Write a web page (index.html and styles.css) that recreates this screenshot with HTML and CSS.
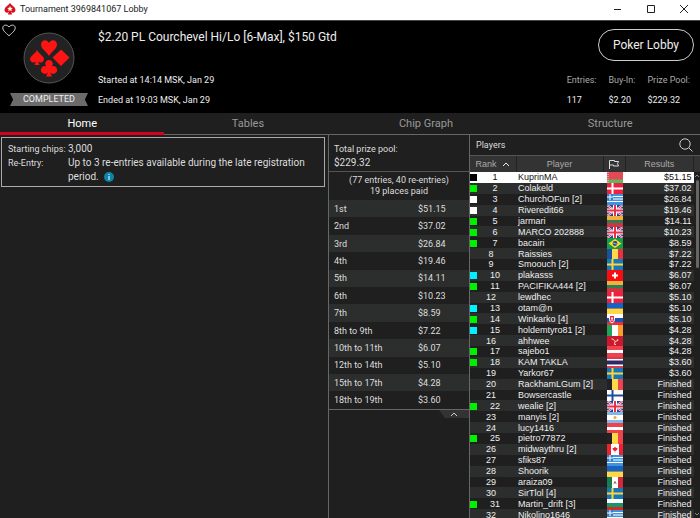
FILE: index.html
```html
<!DOCTYPE html>
<html lang="en">
<head>
    <meta charset="UTF-8">
    <meta name="viewport" content="width=device-width, initial-scale=1.0">
    <title>Tournament 3969841067 Lobby</title>
    <link rel="stylesheet" href="styles.css">
</head>
<body>
    <!-- Flag shapes, referenced from the players table -->
    <svg class="sprite" aria-hidden="true">
        <symbol id="by" viewBox="0 0 16 11" preserveAspectRatio="none"><path fill="#e34a55" d="M0 0h16v11H0z"/><path fill="#5cb85c" d="M0 7.500h16V11H0z"/><path stroke="#f3d5d5" stroke-dasharray="1 1" d="M1 0v11"/></symbol>
        <symbol id="dk" viewBox="0 0 16 11" preserveAspectRatio="none"><path fill="#f0203f" d="M0 0h16v11H0z"/><path stroke="#fff" stroke-width="2" d="M5.500 0v11M0 5.500h16"/></symbol>
        <symbol id="gr" viewBox="0 0 16 11" preserveAspectRatio="none"><path fill="#3f93dc" d="M0 0h16v11H0z"/><path stroke="#fff" d="M6 2.500h10M6 5h10M0 7.500h16"/><path fill="#2b7fcb" d="M0 0h6v6H0z"/><path stroke="#fff" d="M3 0v6M0 3h6"/></symbol>
        <symbol id="gb" viewBox="0 0 16 11" preserveAspectRatio="none"><path fill="#2b3f94" d="M0 0h16v11H0z"/><path stroke="#fff" stroke-width="2" d="M0 0l16 11M16 0L0 11"/><path stroke="#e0304a" d="M0 0l16 11M16 0L0 11"/><path stroke="#fff" stroke-width="4" d="M8 0v11M0 5.500h16"/><path stroke="#e8304a" stroke-width="2" d="M8 0v11M0 5.500h16"/></symbol>
        <symbol id="lt" viewBox="0 0 16 11" preserveAspectRatio="none"><path fill="#f2b13c" d="M0 0h16v4H0z"/><path fill="#2f7d53" d="M0 4h16v3H0z"/><path fill="#cf3440" d="M0 7h16v4H0z"/></symbol>
        <symbol id="br" viewBox="0 0 16 11" preserveAspectRatio="none"><path fill="#149c48" d="M0 0h16v11H0z"/><path fill="#fddc2c" d="M8 1l6.500 4.500L8 10 1.500 5.500z"/><circle cx="8" cy="5.500" r="2.400" fill="#28408f"/><path stroke="#fff" stroke-width=".6" d="M6 5l4 1.200"/></symbol>
        <symbol id="ro" viewBox="0 0 16 11" preserveAspectRatio="none"><path fill="#1c4f9e" d="M0 0h5v11H0z"/><path fill="#ffd84a" d="M5 0h6v11H5z"/><path fill="#e8303f" d="M11 0h5v11h-5z"/></symbol>
        <symbol id="se" viewBox="0 0 16 11" preserveAspectRatio="none"><path fill="#1479b8" d="M0 0h16v11H0z"/><path stroke="#ffd23c" stroke-width="2" d="M5.500 0v11M0 5.500h16"/></symbol>
        <symbol id="ch" viewBox="0 0 16 11" preserveAspectRatio="none"><path fill="#f80d10" d="M0 0h16v11H0z"/><path stroke="#fff" stroke-width="2" d="M8 2.500v6M5 5.500h6"/></symbol>
        <symbol id="ua" viewBox="0 0 16 11" preserveAspectRatio="none"><path fill="#1763c4" d="M0 0h16v5.500H0z"/><path fill="#ffd84a" d="M0 5.500h16V11H0z"/></symbol>
        <symbol id="sk" viewBox="0 0 16 11" preserveAspectRatio="none"><path fill="#fff" d="M0 0h16v4H0z"/><path fill="#1d52b0" d="M0 4h16v4H0z"/><path fill="#e8303f" d="M0 8h16v3H0z"/><path fill="#e8303f" stroke="#fff" d="M2.500 1.500h5v4q0 2.500-2.500 3.500-2.500-1-2.500-3.500z"/><path stroke="#fff" d="M5 3v4M4 4.500h2"/></symbol>
        <symbol id="ie" viewBox="0 0 16 11" preserveAspectRatio="none"><path fill="#21a35a" d="M0 0h5v11H0z"/><path fill="#fff" d="M5 0h6v11H5z"/><path fill="#ff9a2e" d="M11 0h5v11h-5z"/></symbol>
        <symbol id="im" viewBox="0 0 16 11" preserveAspectRatio="none"><path fill="#cc1730" d="M0 0h16v11H0z"/><path fill="none" stroke="#f5d6b0" d="M8 5.500L6 3H4.500M8 5.500l3-1-.5-1.500M8 5.500l-.5 3H9"/></symbol>
        <symbol id="at" viewBox="0 0 16 11" preserveAspectRatio="none"><path fill="#f0414f" d="M0 0h16v11H0z"/><path fill="#fff" d="M0 4h16v3H0z"/></symbol>
        <symbol id="th" viewBox="0 0 16 11" preserveAspectRatio="none"><path fill="#d93a4c" d="M0 0h16v11H0z"/><path fill="#fff" d="M0 2h16v7H0z"/><path fill="#2c2a66" d="M0 3.500h16v4H0z"/></symbol>
        <symbol id="be" viewBox="0 0 16 11" preserveAspectRatio="none"><path fill="#222" d="M0 0h5v11H0z"/><path fill="#ffd84a" d="M5 0h6v11H5z"/><path fill="#f0414f" d="M11 0h5v11h-5z"/></symbol>
        <symbol id="fi" viewBox="0 0 16 11" preserveAspectRatio="none"><path fill="#fff" d="M0 0h16v11H0z"/><path stroke="#1d4c9c" stroke-width="2" d="M5.500 0v11M0 5.500h16"/></symbol>
        <symbol id="ar" viewBox="0 0 16 11" preserveAspectRatio="none"><path fill="#7fb9e8" d="M0 0h16v11H0z"/><path fill="#fff" d="M0 3h16v5H0z"/><circle cx="8" cy="5.500" r="1.500" fill="#f0a830"/></symbol>
        <symbol id="ca" viewBox="0 0 16 11" preserveAspectRatio="none"><path fill="#fff" d="M0 0h16v11H0z"/><path fill="#f0202c" d="M0 0h4v11H0zM12 0h4v11h-4zM8 2.500l1 1.500 1.500 0-.5 2L8.300 7v1.500h-.6V7L6 6l-.5-2H7z"/></symbol>
        <symbol id="mx" viewBox="0 0 16 11" preserveAspectRatio="none"><path fill="#187a50" d="M0 0h5v11H0z"/><path fill="#fff" d="M5 0h6v11H5z"/><path fill="#d3283c" d="M11 0h5v11h-5z"/><path fill="none" stroke="#8a7a50" d="M6.500 6.500q1.500-3 3 0M8 4v3"/></symbol>
        <symbol id="bg" viewBox="0 0 16 11" preserveAspectRatio="none"><path fill="#fff" d="M0 0h16v4H0z"/><path fill="#14976c" d="M0 4h16v4H0z"/><path fill="#d9291c" d="M0 8h16v3H0z"/></symbol>
    </svg>

    <div class="titlebar">
        <svg class="app-icon" viewBox="0 0 12 12"><path fill="#d9101c" d="M6 0C7.500 2.300 11.500 4 11.500 7A2.600 2.600 0 0 1 7 8.800L8.200 11.500H3.800L5 8.800A2.600 2.600 0 0 1 .5 7C.5 4 4.500 2.300 6 0z"/><path fill="#fff" d="M6 3l.8 1.800 2 .2-1.500 1.300.5 2L6 7.300 4.200 8.300l.5-2L3.200 5l2-.2z"/></svg>
        <span class="window-title">Tournament 3969841067 Lobby</span>
        <div class="window-buttons">
            <button aria-label="Minimize"><svg viewBox="0 0 10 10"><path d="M1 5.500h7"/></svg></button>
            <button aria-label="Maximize"><svg viewBox="0 0 10 10"><path d="M1.500 1.500h7v7h-7z"/></svg></button>
            <button aria-label="Close"><svg viewBox="0 0 10 10"><path d="M1 1l8 8M9 1L1 9"/></svg></button>
        </div>
    </div>

    <header class="header">
        <button class="favorite" aria-label="Favorite"><svg viewBox="0 0 14 13"><path d="M7 11.800C4 9 .8 6.800.8 3.900.8.600 5 .2 7 3 9 .2 13.200.6 13.200 3.900 13.200 6.800 10 9 7 11.800z"/></svg></button>
        <div class="badge">
            <svg class="suits" viewBox="0 0 52 52">
                <circle cx="26" cy="26" r="25" fill="#222" stroke="#555"/>
                <g fill="#ff1414">
                    <path d="M26 24C23 19 18 17 18 12.500 18 7.500 24 6.500 26 11 28 6.500 34 7.500 34 12.500 34 17 29 19 26 24z"/>
                    <path d="M38 17.500l8.500 8-8.500 8.500-8.500-8.500z"/>
                    <path d="M14 18c2 4 7 6 7 9.500a3.500 3.500 0 0 1-6 2l1.500 3.500h-5l1.500-3.500a3.500 3.500 0 0 1-6-2C7 24 12 22 14 18z"/>
                    <path d="M26 28a3.800 3.800 0 0 1 3 6.200 3.900 3.900 0 1 1-2 6L29 44.500h-6L25 40.200a3.900 3.900 0 1 1-2-6A3.800 3.800 0 0 1 26 28z"/>
                </g>
            </svg>
            <div class="status">COMPLETED</div>
        </div>
        <div class="about">
            <h1>$2.20 PL Courchevel Hi/Lo [6-Max], $150 Gtd</h1>
            <p>Started at 14:14 MSK, Jan 29</p>
            <p>Ended at 19:03 MSK, Jan 29</p>
        </div>
        <div class="summary">
            <button class="lobby-button">Poker Lobby</button>
            <dl>
                <div><dt>Entries:</dt><dd>117</dd></div>
                <div><dt>Buy-In:</dt><dd>$2.20</dd></div>
                <div><dt>Prize Pool:</dt><dd>$229.32</dd></div>
            </dl>
        </div>
    </header>

    <nav class="tabs">
        <a href="#home" class="active">Home</a>
        <a href="#tables">Tables</a>
        <a href="#chips">Chip Graph</a>
        <a href="#structure">Structure</a>
    </nav>

    <main class="content">
        <section class="home">
            <dl class="info">
                <dt>Starting chips:</dt>
                <dd>3,000</dd>
                <dt>Re-Entry:</dt>
                <dd>Up to 3 re-entries available during the late registration period. <svg class="tip" viewBox="0 0 10 10"><circle cx="5" cy="5" r="5" fill="#0a86a8"/><path stroke="#fff" d="M5 2v1M5 4v4"/></svg></dd>
            </dl>
        </section>

        <section class="prizes">
            <div class="pool">
                <div>Total prize pool:</div>
                <div class="pool-value">$229.32</div>
            </div>
            <div class="places">
                <div>(77 entries, 40 re-entries)</div>
                <div>19 places paid</div>
            </div>
            <table class="payouts"><tbody id="payouts"></tbody></table>
            <button class="collapse" aria-label="Collapse"><svg viewBox="0 0 8 5"><path d="M1 4l3-3 3 3"/></svg></button>
        </section>

        <section class="players">
            <div class="players-head">
                <span>Players</span>
                <button class="search" aria-label="Search"><svg viewBox="0 0 14 14"><circle cx="6" cy="6" r="5.200"/><path d="M10 10l3.500 3.500"/></svg></button>
            </div>
            <div class="players-body">
                <table class="standings">
                    <thead>
                        <tr>
                            <th class="rank">Rank <svg class="sort" viewBox="0 0 8 5"><path d="M1 4l3-3 3 3"/></svg></th>
                            <th class="player">Player</th>
                            <th class="flag"><svg class="flag-icon" viewBox="0 0 12 10"><path d="M1.500 10V1.500h5v1h4l-1 2.200 1 2.300h-5V6h-4"/></svg></th>
                            <th class="result">Results</th>
                        </tr>
                    </thead>
                    <tbody id="standings"></tbody>
                </table>
                <div class="scrollbar">
                    <svg viewBox="0 0 6 4"><path d="M1 3l2-2 2 2"/></svg>
                    <div class="thumb"></div>
                    <svg viewBox="0 0 6 4"><path d="M1 1l2 2 2-2"/></svg>
                </div>
            </div>
        </section>
    </main>

    <script src="script.js"></script>
</body>
</html>
```
FILE: styles.css
```css
* {
    box-sizing: border-box;
}

body {
    margin: 0;
    height: 100vh;
    display: flex;
    flex-direction: column;
    overflow: hidden;
    background-color: #1f1f1f;
    color: #ddd;
    font-family: Roboto, sans-serif;
    font-size: 9px;
    line-height: 14px;
}

button {
    padding: 0;
    border: none;
    background: none;
    color: inherit;
    font: inherit;
    cursor: pointer;
}

svg {
    display: block;
    fill: none;
}

h1, p, dl, dd {
    margin: 0;
}

.sprite {
    position: absolute;
    width: 0;
    height: 0;
}

/* Title bar */
.titlebar {
    display: flex;
    align-items: center;
    height: 20px;
    flex: none;
    padding: 0 11px 2px 4px;
    gap: 4px;
    background-color: #fff;
    color: #222;
}

.app-icon {
    width: 12px;
    height: 12px;
}

.window-buttons {
    display: flex;
    gap: 23px;
    margin-left: auto;
}

.window-buttons svg {
    width: 10px;
    height: 10px;
    stroke: #222;
}

/* Header */
.header {
    display: flex;
    flex: none;
    height: 93px;
    background-color: #000;
    color: #eee;
    border-top: 1px solid #444;
}

.favorite {
    width: 14px;
    height: 13px;
    margin: 3px 0 0 2px;
}

.favorite svg {
    stroke: #ccc;
}

.badge {
    display: flex;
    flex-direction: column;
    align-items: center;
    width: 82px;
    margin-right: 5px;
    margin-left: -8px;
    padding-top: 11px;
}

.suits {
    width: 52px;
    height: 52px;
}

.status {
    width: 78px;
    margin-top: 9px;
    line-height: 13px;
    text-align: center;
    background-color: #6b6b6b;
    clip-path: polygon(0 0, 100% 0, 96% 50%, 100% 100%, 0 100%, 4% 50%);
}

.about {
    flex: 1;
    padding: 7px 0 0 3px;
}

h1 {
    margin-bottom: 24px;
    font-size: 12px;
    font-weight: normal;
    line-height: 18px;
}

.about p {
    line-height: 20px;
}

.summary {
    display: flex;
    flex-direction: column;
    align-items: flex-end;
    padding: 8px 6px 0 0;
}

.lobby-button {
    width: 96px;
    height: 32px;
    border: 1px solid #ccc;
    border-radius: 16px;
    font-size: 12px;
}

.summary dl {
    display: flex;
    gap: 12px;
    margin: 9px 4px 0 0;
    line-height: 20px;
}

.summary dt {
    color: #aaa;
}

/* Tabs */
.tabs {
    display: flex;
    flex: none;
    height: 22px;
    border-bottom: 1px solid #666;
}

.tabs a {
    flex: 1 1 auto;
    color: #999;
    font-size: 11px;
    line-height: 22px;
    text-align: center;
    text-decoration: none;
}

.tabs .active {
    color: #fff;
    border-bottom: 3px solid #d8001f;
    height: 22px;
}

/* Content columns */
.content {
    display: grid;
    grid-template-columns: 1fr 141px 231px;
    flex: 1;
    min-height: 0;
}

.home {
    padding: 2px 3px 0 1px;
}

.info {
    display: grid;
    grid-template-columns: 60px 1fr;
    padding: 4px 6px 2px;
    border: 1px solid #aaa;
}

.info dd {
    font-size: 10px;
}

.tip {
    display: inline-block;
    width: 10px;
    height: 10px;
    margin-left: 3px;
    vertical-align: text-bottom;
}

.prizes {
    border-left: 1px solid #666;
}

.pool {
    padding: 8px 5px 2px;
    line-height: 13px;
    border-bottom: 1px solid #555;
}

.pool-value {
    font-size: 10px;
}

.places {
    padding: 3px 2px 3px;
    line-height: 11px;
    text-align: center;
}

table {
    width: 100%;
    border-collapse: collapse;
}

td, th {
    padding: 0;
    font-weight: normal;
}

.payouts {
    height: 210px;
    border-bottom: 1px solid #666;
}

.payouts tr:nth-child(odd) {
    background-color: #2c2e2d;
}

.payouts td {
    padding-left: 5px;
}

.payouts td + td {
    width: 56px;
}

.collapse {
    display: block;
    width: 30px;
    height: 8px;
    margin-left: auto;
    background-color: #333;
    clip-path: polygon(0 0, 100% 0, 100% 100%, 20% 100%);
}

.collapse svg {
    width: 8px;
    height: 5px;
    margin: 0 auto;
    stroke: #ccc;
}

/* Players */
.players {
    display: flex;
    flex-direction: column;
    min-height: 0;
    border-left: 1px solid #666;
}

.players-head {
    display: flex;
    flex: none;
    align-items: center;
    justify-content: space-between;
    height: 21px;
    padding: 0 7px 0 6px;
    border-bottom: 1px solid #555;
}

.search svg {
    width: 14px;
    height: 14px;
    stroke: #ccc;
}

.players-body {
    display: flex;
    flex: 1;
    min-height: 0;
    overflow: hidden;
}

.standings {
    flex: 1;
    height: calc(100% + 2px);
    table-layout: fixed;
    font-family: "Liberation Sans", Arial, sans-serif;
    line-height: 10px;
}

.standings th {
    height: 16px;
    background-color: #333;
    color: #aaa;
    border-right: 1px solid #222;
}

.standings .rank {
    width: 46px;
}

.standings .player {
    width: 87px;
}

.standings .flag {
    width: 22px;
}

.sort {
    display: inline-block;
    width: 8px;
    height: 5px;
    margin-left: 3px;
    stroke: #eee;
}

.flag-icon {
    width: 12px;
    height: 10px;
    margin: 0 auto;
    stroke: #ddd;
}

.standings tbody tr {
    color: #eee;
}

.standings tbody tr:nth-child(even) {
    background-color: #2c2e2d;
}

.standings tbody tr:first-child {
    background-color: #fff;
    color: #111;
}

.standings td:first-child {
    padding-right: 4px;
    text-align: center;
}

.standings td:nth-child(2) {
    padding-left: 2px;
    white-space: nowrap;
}

.standings td:last-child {
    padding-right: 2px;
    text-align: right;
}

/* Flags fill the whole row without making it taller */
.standings td svg {
    width: 16px;
    height: 11px;
    margin: 0 0 -1px 4px;
}

.marker {
    float: left;
    width: 7px;
    height: 7px;
    margin: 2px 1px 0 0;
}

.green {
    background-color: #00f000;
}

.cyan {
    background-color: #00f0ff;
}

.white {
    background-color: #fff;
}

.black {
    background-color: #000;
}

.scrollbar {
    display: flex;
    flex-direction: column;
    align-items: center;
    width: 6px;
    border-top: 16px solid #333;
}

.scrollbar svg {
    width: 6px;
    height: 4px;
    margin: 2px 0;
    stroke: #888;
}

.thumb {
    width: 3px;
    height: 88px;
    margin-bottom: auto;
    border-radius: 2px;
    background-color: #666;
}
```
FILE: script.js
```js
const payouts = [
    ['1st', '$51.15'],
    ['2nd', '$37.02'],
    ['3rd', '$26.84'],
    ['4th', '$19.46'],
    ['5th', '$14.11'],
    ['6th', '$10.23'],
    ['7th', '$8.59'],
    ['8th to 9th', '$7.22'],
    ['10th to 11th', '$6.07'],
    ['12th to 14th', '$5.10'],
    ['15th to 17th', '$4.28'],
    ['18th to 19th', '$3.60']
];

// name, flag, result, marker colour
const players = [
    ['KuprinMA', 'by', '$51.15', 'black'],
    ['Colakeld', 'dk', '$37.02', 'green'],
    ['ChurchOFun [2]', 'gr', '$26.84', 'white'],
    ['Riveredit66', 'gb', '$19.46', 'white'],
    ['jarmari', 'lt', '$14.11', 'green'],
    ['MARCO 202888', 'gb', '$10.23', 'green'],
    ['bacairi', 'br', '$8.59', 'green'],
    ['Raissies', 'ro', '$7.22'],
    ['Smoouch [2]', 'se', '$7.22'],
    ['plakasss', 'ch', '$6.07', 'cyan'],
    ['PACIFIKA444 [2]', 'lt', '$6.07', 'green'],
    ['lewdhec', 'dk', '$5.10'],
    ['otam@n', 'ua', '$5.10', 'cyan'],
    ['Winkarko [4]', 'sk', '$5.10', 'green'],
    ['holdemtyro81 [2]', 'ie', '$4.28', 'cyan'],
    ['ahhwee', 'im', '$4.28'],
    ['sajebo1', 'at', '$4.28', 'green'],
    ['KAM TAKLA', 'th', '$3.60', 'green'],
    ['Yarkor67', 'se', '$3.60'],
    ['RackhamLGum [2]', 'be', 'Finished'],
    ['Bowsercastle', 'fi', 'Finished'],
    ['wealie [2]', 'gb', 'Finished', 'green'],
    ['manyis [2]', 'ar', 'Finished'],
    ['lucy1416', 'at', 'Finished'],
    ['pietro77872', 'be', 'Finished', 'green'],
    ['midwaythru [2]', 'ca', 'Finished'],
    ['sfiks87', 'gr', 'Finished'],
    ['Shoorik', 'ua', 'Finished'],
    ['araiza09', 'mx', 'Finished'],
    ['SirTlol [4]', 'se', 'Finished'],
    ['Martin_drift [3]', 'bg', 'Finished', 'green'],
    ['Nikolino1646', 'gr', 'Finished']
];

document.getElementById('payouts').innerHTML = payouts
    .map(([place, prize]) => `<tr><td>${place}</td><td>${prize}</td></tr>`)
    .join('');

document.getElementById('standings').innerHTML = players
    .map(([name, flag, result, marker], i) => `<tr>
        <td>${marker ? `<span class="marker ${marker}"></span>` : ''}${i + 1}</td>
        <td>${name}</td>
        <td><svg><use href="#${flag}"/></svg></td>
        <td>${result}</td>
    </tr>`)
    .join('');
```
